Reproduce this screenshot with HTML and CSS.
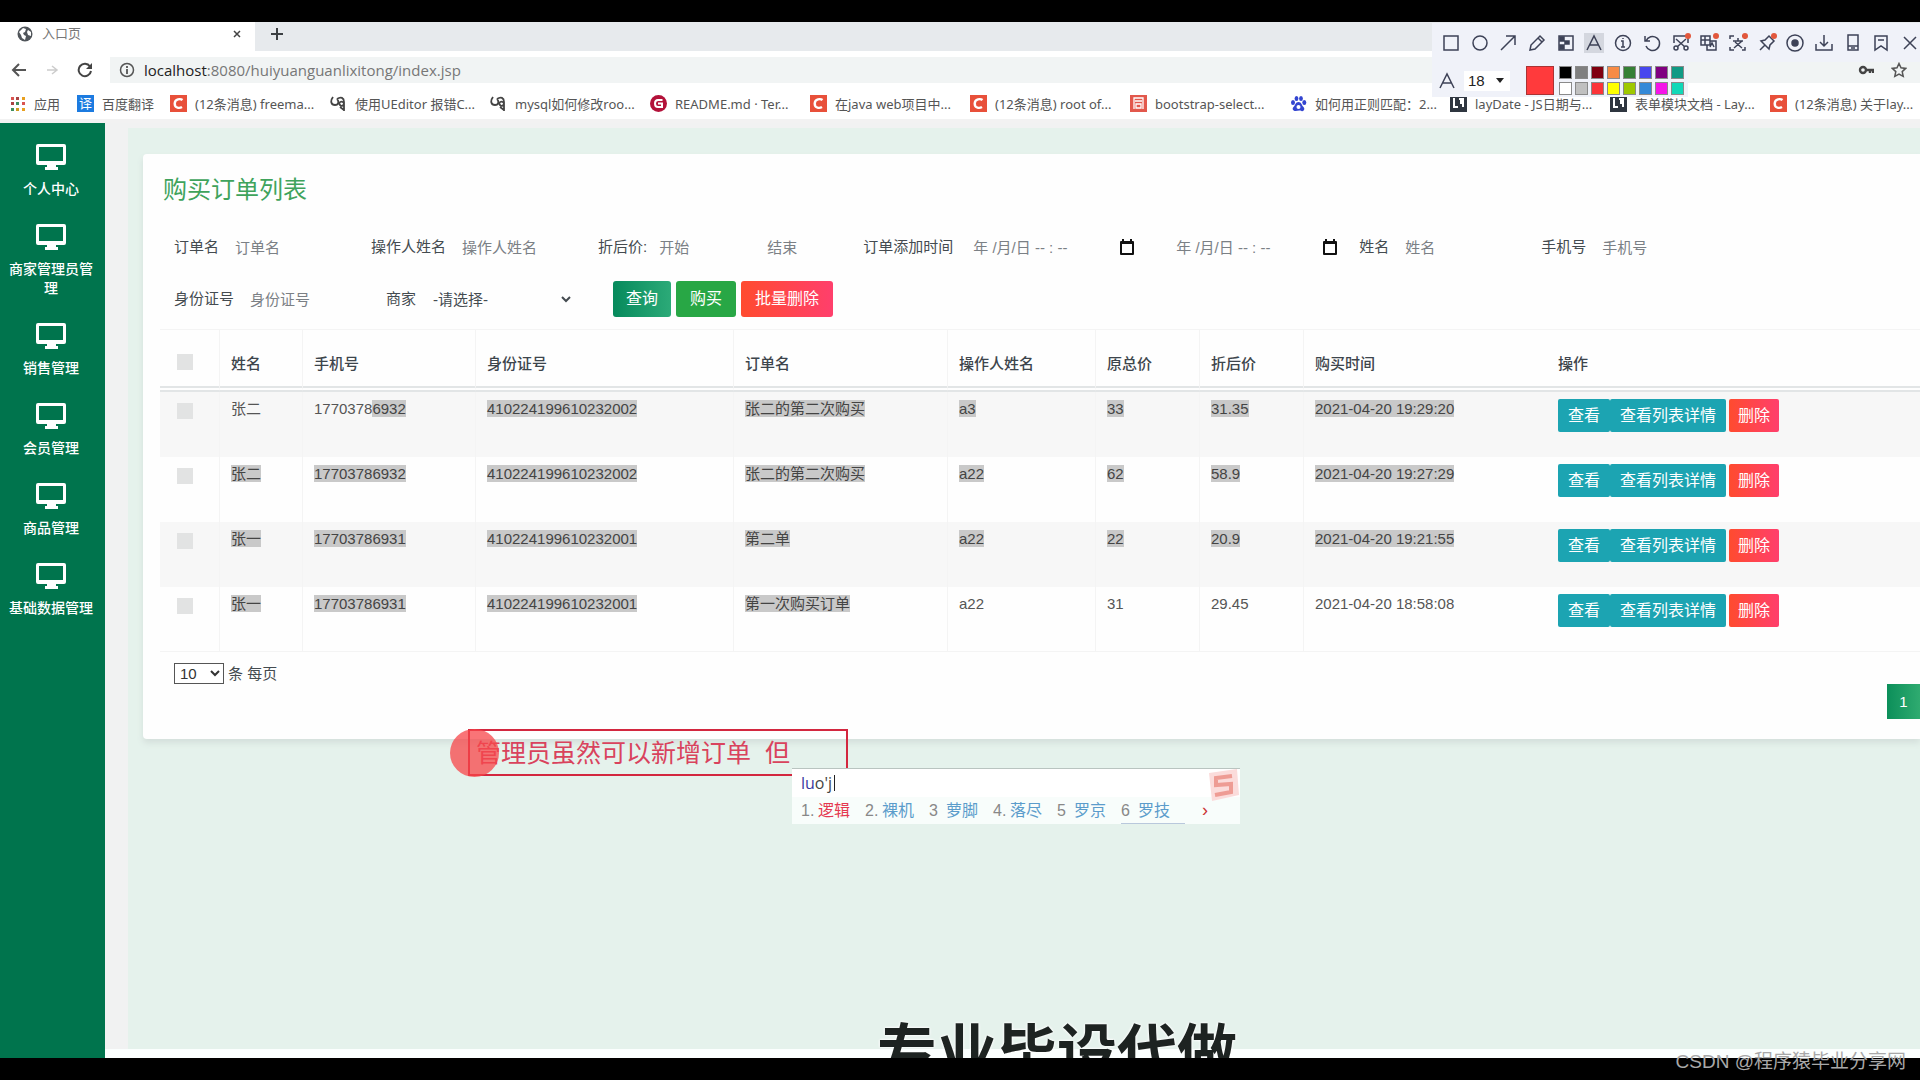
FILE: index.html
```html
<!DOCTYPE html>
<html lang="zh-CN">
<head>
<meta charset="utf-8">
<meta name="viewport" content="width=device-width, initial-scale=1">
<title>入口页</title>
<link rel="stylesheet" href="styles.css">
</head>
<body>
<svg class="sprite" aria-hidden="true">
  <symbol id="monitor" viewBox="0 0 30 26"><path fill-rule="evenodd" d="M2 0h26a2 2 0 0 1 2 2v17a2 2 0 0 1-2 2h-8v2h2v3H9v-3h2v-2H2a2 2 0 0 1-2-2V2a2 2 0 0 1 2-2zm1 3v14h24V3z"/></symbol>
  <symbol id="calendar" viewBox="0 0 16 16"><path fill-rule="evenodd" d="M3 0h2v2h6V0h2v2h1a1 1 0 0 1 1 1v12a1 1 0 0 1-1 1H2a1 1 0 0 1-1-1V3a1 1 0 0 1 1-1h1zM3 5v9h10V5z"/></symbol>
  <symbol id="csdn" viewBox="0 0 17 17"><path fill="#e8503a" d="M0 0h17v17H0z"/><path fill="none" stroke="#fff" stroke-width="2.4" d="M12.5 5C10.500 3.500 5 3.600 4.700 8.500c0 5 5 5 7.300 3.500"/></symbol>
  <symbol id="blog" viewBox="0 0 17 17"><path fill="none" stroke="#444" stroke-width="1.800" d="M3 2C0 6 1 10 5 10s4-4 2-6M7 4c4-3 7-1 7 3v9M14 8c-3-3-6 0-4 2s4 0 4-2M14 15l-4-3"/></symbol>
  <symbol id="lay" viewBox="0 0 17 17"><path fill="#2f3640" d="M0 0h17v17H0z"/><path fill="none" stroke="#fff" stroke-width="2" d="M4 3v9h4M9 4h4v8M11 4v5"/></symbol>
</svg>

<div class="screen">
  <header class="browser">
    <div class="tabs">
      <div class="tab">
        <svg class="i16" viewBox="0 0 16 16"><circle cx="8" cy="8" r="7.500" fill="#50555a"/><path fill="#fff" d="M2 6l4-4 3 1-1 3-2 1 1 2 2 1-1 4-3-2-1-3zM11 4l3 2v4l-3-1-1-3z"/></svg>
        <span class="tab-title">入口页</span>
        <button class="plain" aria-label="关闭标签页"><svg class="i10" viewBox="0 0 10 10"><path d="M2 2l6 6M8 2l-6 6" stroke="#444" stroke-width="1.500"/></svg></button>
      </div>
      <button class="plain new-tab" aria-label="新标签页"><svg class="i14" viewBox="0 0 14 14"><path d="M7 1v12M1 7h12" stroke="#3c4043" stroke-width="2"/></svg></button>
    </div>
    <div class="address-row">
      <button class="plain" aria-label="后退"><svg class="i16" viewBox="0 0 16 16"><path d="M15 8H2M8 2L2 8l6 6" fill="none" stroke="#555" stroke-width="2"/></svg></button>
      <button class="plain" aria-label="前进"><svg class="i16" viewBox="0 0 16 16"><path d="M3 8h10M8 4l5 4-5 4" fill="none" stroke="#ccc" stroke-width="1.500"/></svg></button>
      <button class="plain" aria-label="刷新"><svg class="i16" viewBox="0 0 16 16"><path d="M13 4.500A6.200 6.200 0 1 0 14 9" fill="none" stroke="#444" stroke-width="2"/><path d="M15 1v6H9z" fill="#444"/></svg></button>
      <div class="address">
        <svg class="i16" viewBox="0 0 16 16"><circle cx="8" cy="8" r="6.500" fill="none" stroke="#555" stroke-width="1.500"/><path d="M8 7v5M8 4v2" stroke="#555" stroke-width="1.800"/></svg>
        <span class="url"><b>localhost</b>:8080/huiyuanguanlixitong/index.jsp</span>
        <svg class="i16 key" viewBox="0 0 16 16"><path fill="none" stroke="#444" stroke-width="2.400" d="M8 8a3 3 0 1 0-6 0 3 3 0 0 0 6 0h7v3M12 8v3"/></svg>
        <svg class="i16" viewBox="0 0 16 16"><path fill="none" stroke="#555" stroke-width="1.500" d="M8 1.500l2 4.300 4.700.6-3.500 3.200 1 4.700L8 12l-4.200 2.300 1-4.700L1.300 6.400 6 5.800z"/></svg>
      </div>
    </div>
    <nav class="bookmarks" aria-label="书签">
      <a class="apps" href="#"><svg class="i14" viewBox="0 0 14 14"><path fill="#d9534f" d="M0 0h3v3H0zM11 5h3v3h-3z"/><path fill="#a44" d="M5 0h3v3H5zM0 5h3v3H0z"/><path fill="#e8a020" d="M11 0h3v3h-3zM11 11h3v3h-3z"/><path fill="#3f8f60" d="M5 5h3v3H5zM0 11h3v3H0z"/><path fill="#cc9c20" d="M5 11h3v3H5z"/></svg>应用</a>
      <a class="baidu" href="#"><span class="fan">译</span>百度翻译</a>
      <a href="#"><svg class="i17"><use href="#csdn"/></svg>(12条消息) freema...</a>
      <a href="#"><svg class="i17"><use href="#blog"/></svg>使用UEditor 报错C...</a>
      <a href="#"><svg class="i17"><use href="#blog"/></svg>mysql如何修改roo...</a>
      <a href="#"><svg class="i17" viewBox="0 0 17 17"><circle cx="8.500" cy="8.500" r="8.500" fill="#b3123a"/><path d="M12.500 5H8Q5 5 5 8.500T8 12h4V8.500H8" fill="none" stroke="#fff" stroke-width="2"/></svg>README.md · Ter...</a>
      <a href="#"><svg class="i17"><use href="#csdn"/></svg>在java web项目中...</a>
      <a href="#"><svg class="i17"><use href="#csdn"/></svg>(12条消息) root of...</a>
      <a href="#"><svg class="i17" viewBox="0 0 17 17"><path fill="#e2584c" d="M0 0h17v17H0z"/><path d="M4 14V3h9v11M5 6h7M6 9h5v4H6z" fill="none" stroke="#fff" stroke-width="1.300"/></svg>bootstrap-select...</a>
      <a href="#"><svg class="i17" viewBox="0 0 17 17"><g fill="#3345d0"><ellipse cx="3" cy="7.500" rx="2" ry="2.500"/><ellipse cx="6.500" cy="3.500" rx="1.900" ry="2.600"/><ellipse cx="11" cy="3.500" rx="1.900" ry="2.600"/><ellipse cx="14.300" cy="7.500" rx="2" ry="2.500"/><path d="M8.500 7c3 0 3 3 5 5s0 5-2 4-4 0-6 0-4-2-2-4 2-5 5-5z"/></g><circle cx="8.500" cy="12" r="2" fill="#fff"/></svg>如何用正则匹配：2...</a>
      <a href="#"><svg class="i17"><use href="#lay"/></svg>layDate - JS日期与...</a>
      <a href="#"><svg class="i17"><use href="#lay"/></svg>表单模块文档 - Lay...</a>
      <a href="#"><svg class="i17"><use href="#csdn"/></svg>(12条消息) 关于lay...</a>
    </nav>
  </header>

  <div class="app">
    <nav class="sidebar" aria-label="主菜单">
      <a href="#"><svg><use href="#monitor"/></svg>个人中心</a>
      <a href="#"><svg><use href="#monitor"/></svg>商家管理员管理</a>
      <a href="#"><svg><use href="#monitor"/></svg>销售管理</a>
      <a href="#"><svg><use href="#monitor"/></svg>会员管理</a>
      <a href="#"><svg><use href="#monitor"/></svg>商品管理</a>
      <a href="#"><svg><use href="#monitor"/></svg>基础数据管理</a>
    </nav>
    <main class="content">
      <section class="card">
        <h1>购买订单列表</h1>
        <form class="filters">
          <div class="field"><label for="f-order">订单名</label><input id="f-order" type="text" placeholder="订单名"></div>
          <div class="field"><label for="f-op">操作人姓名</label><input id="f-op" type="text" placeholder="操作人姓名"></div>
          <div class="field"><label for="f-min">折后价:</label><input class="short" id="f-min" type="text" placeholder="开始"><input class="short" type="text" aria-label="折后价结束" placeholder="结束"></div>
          <div class="field"><label for="f-from">订单添加时间</label>
            <div class="date"><input id="f-from" type="text" placeholder="年 /月/日 -- : --"><button class="plain" type="button" aria-label="选择开始时间"><svg class="i16"><use href="#calendar"/></svg></button></div>
            <div class="date"><input type="text" aria-label="结束时间" placeholder="年 /月/日 -- : --"><button class="plain" type="button" aria-label="选择结束时间"><svg class="i16"><use href="#calendar"/></svg></button></div>
          </div>
          <div class="field"><label for="f-name">姓名</label><input id="f-name" type="text" placeholder="姓名"></div>
          <div class="field"><label for="f-tel">手机号</label><input id="f-tel" type="text" placeholder="手机号"></div>
          <div class="field"><label for="f-id">身份证号</label><input id="f-id" type="text" placeholder="身份证号"></div>
          <div class="field"><label for="f-shop">商家</label><select id="f-shop"><option>-请选择-</option></select></div>
          <div class="buttons">
            <button class="btn query" type="button">查询</button>
            <button class="btn buy" type="button">购买</button>
            <button class="btn danger" type="button">批量删除</button>
          </div>
        </form>

        <table>
          <colgroup><col class="c-check"><col class="c-name"><col class="c-tel"><col class="c-id"><col class="c-order"><col class="c-op"><col class="c-price"><col class="c-price"><col class="c-time"><col></colgroup>
          <thead>
            <tr><th><input type="checkbox" aria-label="全选"></th><th>姓名</th><th>手机号</th><th>身份证号</th><th>订单名</th><th>操作人姓名</th><th>原总价</th><th>折后价</th><th>购买时间</th><th>操作</th></tr>
          </thead>
          <tbody>
            <tr><td><input type="checkbox" aria-label="选择第1行"></td><td>张二</td><td>1770378<mark>6932</mark></td><td><mark>410224199610232002</mark></td><td><mark>张二的第二次购买</mark></td><td><mark>a3</mark></td><td><mark>33</mark></td><td><mark>31.35</mark></td><td><mark>2021-04-20 19:29:20</mark></td><td><div class="actions"><button class="btn info">查看</button><button class="btn info">查看列表详情</button><button class="btn danger">删除</button></div></td></tr>
            <tr><td><input type="checkbox" aria-label="选择第2行"></td><td><mark>张二</mark></td><td><mark>17703786932</mark></td><td><mark>410224199610232002</mark></td><td><mark>张二的第二次购买</mark></td><td><mark>a22</mark></td><td><mark>62</mark></td><td><mark>58.9</mark></td><td><mark>2021-04-20 19:27:29</mark></td><td><div class="actions"><button class="btn info">查看</button><button class="btn info">查看列表详情</button><button class="btn danger">删除</button></div></td></tr>
            <tr><td><input type="checkbox" aria-label="选择第3行"></td><td><mark>张一</mark></td><td><mark>17703786931</mark></td><td><mark>410224199610232001</mark></td><td><mark>第二单</mark></td><td><mark>a22</mark></td><td><mark>22</mark></td><td><mark>20.9</mark></td><td><mark>2021-04-20 19:21:55</mark></td><td><div class="actions"><button class="btn info">查看</button><button class="btn info">查看列表详情</button><button class="btn danger">删除</button></div></td></tr>
            <tr><td><input type="checkbox" aria-label="选择第4行"></td><td><mark>张一</mark></td><td><mark>17703786931</mark></td><td><mark>410224199610232001</mark></td><td><mark>第一次购买订单</mark></td><td>a22</td><td>31</td><td>29.45</td><td>2021-04-20 18:58:08</td><td><div class="actions"><button class="btn info">查看</button><button class="btn info">查看列表详情</button><button class="btn danger">删除</button></div></td></tr>
          </tbody>
        </table>

        <div class="page-size"><select id="page-size"><option>10</option></select><label for="page-size">条 每页</label></div>
        <div class="pager"><button class="page">1</button></div>
      </section>
    </main>
  </div>

  <aside class="snip" aria-label="截图工具">
    <div class="snip-tools">
      <svg viewBox="0 0 20 20"><path d="M3 3h14v14H3z"/></svg>
      <svg viewBox="0 0 20 20"><circle cx="10" cy="10" r="7"/></svg>
      <svg viewBox="0 0 20 20"><path d="M3 17L17 3M8 3h9v9"/></svg>
      <svg viewBox="0 0 20 20"><path d="M3 17l1-5 9-9 4 4-9 9zM11 5l4 4"/></svg>
      <svg viewBox="0 0 20 20"><path d="M3 3h14v14H3z"/><path class="solid" d="M4 4h4v4H4zM9 8h4v3H9zM4 12h4v4H4z"/></svg>
      <svg class="active" viewBox="0 0 20 20"><path d="M3 17l7-14 7 14M6 12h8"/></svg>
      <svg viewBox="0 0 20 20"><circle cx="10" cy="10" r="7.500"/><path d="M8 8h2v6M8 14h4M10 5v1"/></svg>
      <svg viewBox="0 0 20 20"><path d="M3 3v5h5M4 8a7 7 0 1 1 0 5"/></svg>
      <svg viewBox="0 0 20 20"><path d="M3 10V3h14v7M5 6l9 8M15 6l-9 8"/><circle cx="5" cy="15" r="2"/><circle cx="15" cy="15" r="2"/><circle class="dot" cx="17" cy="3" r="3"/></svg>
      <svg viewBox="0 0 20 20"><path d="M2 3h9v9H2zM2 7h9M6 3v9M8 12v5h9V8h-6M11 14l2-4 2 4"/><circle class="dot" cx="17" cy="3" r="3"/></svg>
      <svg viewBox="0 0 20 20"><path d="M2 6V3h4M14 3h3v3M2 14v3h4M14 17h3v-3M5 8h10M10 5v3M6 15l8-7M7 9l7 6"/><circle class="dot" cx="17" cy="3" r="3"/></svg>
      <svg viewBox="0 0 20 20"><path d="M3 17l5-5M4 8l8 8 1-4 4-4-5-5-4 4z"/><circle class="dot" cx="17" cy="3" r="3"/></svg>
      <svg viewBox="0 0 20 20"><circle cx="10" cy="10" r="8"/><circle class="solid" cx="10" cy="10" r="3"/></svg>
      <svg viewBox="0 0 20 20"><path d="M10 2v10M6 9l4 4 4-4M2 11v6h16v-6"/></svg>
      <svg viewBox="0 0 20 20"><path d="M5 2h10v15H5zM5 13h10M8 15h4"/></svg>
      <svg viewBox="0 0 20 20"><path d="M4 3h12v14l-6-4-6 4zM7 7h6"/></svg>
      <svg viewBox="0 0 20 20"><path d="M4 4l12 12M16 4L4 16"/></svg>
    </div>
    <div class="snip-options">
      <svg class="font-icon" viewBox="0 0 20 20"><path d="M3 17l7-14 7 14M6 12h8"/></svg>
      <button class="size">18<svg viewBox="0 0 10 6"><path d="M0 0h10L5 6z"/></svg></button>
      <span class="current"></span>
      <div class="palette">
        <i class="k1"></i><i class="k2"></i><i class="k3"></i><i class="k4"></i><i class="k5"></i><i class="k6"></i><i class="k7"></i><i class="k8"></i>
        <i class="k9"></i><i class="k10"></i><i class="k11"></i><i class="k12"></i><i class="k13"></i><i class="k14"></i><i class="k15"></i><i class="k16"></i>
      </div>
    </div>
  </aside>

  <div class="note">管理员虽然可以新增订单&nbsp; 但</div>
  <div class="pointer"></div>

  <div class="ime">
    <div class="pinyin"><b>lu</b>o'j<span class="caret"></span></div>
    <ol>
      <li class="first"><span>1.</span>逻辑</li><li><span>2.</span>裸机</li><li><span>3</span>萝脚</li><li><span>4.</span>落尽</li><li><span>5</span>罗京</li><li><span>6</span>罗技</li>
    </ol>
    <span class="more">›</span>
    <svg class="sogou" viewBox="0 0 34 34"><path d="M3 5l28-4 2 26-27 6z" fill="#fbdcdb"/><path d="M26 8L10 10v7l15-1v8L9 27" fill="none" stroke="#ee9c94" stroke-width="4"/></svg>
  </div>

  <div class="caption">专业毕设代做</div>
</div>
<footer class="letterbox"><span>CSDN @程序猿毕业分享网</span></footer>
</body>
</html>
```
FILE: styles.css
```css
* { box-sizing: border-box; }

body {
  margin: 0;
  min-height: 100vh;
  display: flex;
  flex-direction: column;
  padding-top: 22px;
  background: #000;
  color: #444b50;
  font: 15px/20px "Liberation Sans", "Noto Sans CJK SC", sans-serif;
  overflow-x: hidden;
}

button, input, select { font: inherit; color: inherit; }
a { color: inherit; text-decoration: none; }
svg { flex: none; }

.sprite { position: absolute; width: 0; height: 0; }
.i10 { width: 10px; height: 10px; }
.i14 { width: 14px; height: 14px; }
.i16 { width: 16px; height: 16px; }
.i17 { width: 17px; height: 17px; }

.plain {
  display: flex;
  align-items: center;
  padding: 0;
  border: 0;
  background: none;
}

.screen {
  position: relative;
  flex: 1;
  display: flex;
  flex-direction: column;
  overflow: hidden;
  background: #fbfffe;
}

/* browser frame */
.browser {
  background: #fff;
  border-bottom: 4px solid #f2f2f2;
}

.tabs {
  display: flex;
  height: 29px;
  background: #e7eaed;
}

.tab {
  display: flex;
  align-items: center;
  gap: 9px;
  width: 255px;
  padding: 0 13px 6px 17px;
  background: #fff;
}

.tab-title { flex: 1; font-size: 13px; color: #777; }
.new-tab { padding: 0 0 6px 15px; }

.address-row {
  display: flex;
  align-items: center;
  gap: 17px;
  height: 37px;
  padding-left: 11px;
}

.address {
  flex: 1;
  display: flex;
  align-items: center;
  gap: 9px;
  height: 26px;
  padding: 0 13px 0 9px;
  background: #f1f4f4;
}

.url {
  flex: 1;
  color: #777;
  font: 15px/20px "Open Sans", "Noto Sans", sans-serif;
}

.url b { font-weight: 400; color: #222; }
.key { margin-right: 8px; }

.bookmarks {
  display: flex;
  align-items: center;
  height: 31px;
  padding-left: 11px;
  overflow: hidden;
  font: 13px/20px "Noto Sans", "Noto Sans CJK SC", sans-serif;
  color: #555;
}

.bookmarks a {
  flex: none;
  display: flex;
  align-items: center;
  gap: 8px;
  width: 160px;
  white-space: nowrap;
}

.bookmarks .apps { width: 66px; gap: 9px; }
.bookmarks .baidu { width: 93px; }

.fan {
  width: 17px;
  height: 17px;
  background: #1c7be0;
  color: #fff;
  text-align: center;
  line-height: 16px;
}

/* application shell */
.app {
  flex: 1;
  display: flex;
}

.sidebar {
  flex: none;
  width: 105px;
  padding-top: 21px;
  background: #00744d;
  color: #fff;
}

.sidebar a {
  display: flex;
  flex-direction: column;
  align-items: center;
  gap: 10px;
  margin-bottom: 25px;
  padding: 0 8px 0 5px;
  font-size: 14px;
  font-weight: 500;
  line-height: 19px;
  text-align: center;
}

.sidebar svg { width: 30px; height: 26px; fill: #fff; }

.content {
  flex: 1;
  min-width: 0;
  margin-bottom: 9px;
  padding: 26px 0 0 15px;
  border-top: 5px solid #f1f2f2;
  border-left: 23px solid #f1f2f2;
  background: #e5f2ec;
}

.card {
  padding: 20px 0 20px 17px;
  border-radius: 4px 0 0 4px;
  background: #fefefe;
  box-shadow: 0 4px 6px #d4dfdb;
}

h1 {
  margin: 0 0 23px 3px;
  color: #3fa35c;
  font-size: 24px;
  font-weight: 400;
  line-height: 32px;
}

/* search form */
.filters {
  display: flex;
  flex-wrap: wrap;
  row-gap: 16px;
  margin: 0 0 12px 14px;
}

.field { display: flex; align-items: center; height: 36px; }

.field input {
  width: 152px;
  height: 34px;
  padding: 0 0 0 16px;
  border: 0;
  background: none;
}

.field input::placeholder { color: #7b8085; opacity: 1; }
.field .short { width: 108px; padding-left: 12px; }
.date { display: flex; width: 203px; }
.field .date input { width: 166px; padding-left: 20px; }
.date svg { fill: #111; }

.field select {
  width: 158px;
  height: 34px;
  margin-right: 39px;
  padding-left: 13px;
  border: 0;
  background: none;
}

.buttons { display: flex; gap: 5px; }

.btn {
  padding: 0 12px;
  border: 0;
  border-radius: 3px;
  color: #fff;
  font-size: 16px;
  line-height: 36px;
}

.query { padding: 0 13px; background: linear-gradient(90deg, #068a5c, #2caa78); }
.buy { padding: 0 14px; background: #28a745; }
.buttons .danger { padding: 0 14px; }
.danger { background: linear-gradient(90deg, #ff4b2f, #ff3f6c); }
.info { background: #1ca4b2; }

/* order table */
table {
  width: 100%;
  table-layout: fixed;
  border-spacing: 0;
  border-top: 1px solid #f4f4f4;
}

.c-check { width: 59px; }
.c-name { width: 83px; }
.c-tel { width: 173px; }
.c-id { width: 258px; }
.c-order { width: 214px; }
.c-op { width: 148px; }
.c-price { width: 104px; }
.c-time { width: 244px; }

th, td {
  padding: 7px 0 0 11px;
  border-left: 1px solid #f4f4f4;
  text-align: left;
  vertical-align: top;
  white-space: nowrap;
}

th:first-child, td:first-child { padding-left: 17px; border-left: 0; }
th:last-child, td:last-child { border-left: 0; }
td:first-child { padding-top: 11px; }

th {
  height: 62px;
  padding-top: 24px;
  border-bottom: 6px double #e2e5e6;
  color: #3d454c;
  font-weight: 500;
}

td { height: 65px; color: #555; }
tbody tr:nth-child(odd) { background: #f7f7f7; }
tbody tr:last-child td { border-bottom: 1px solid #f4f4f4; }

input[type="checkbox"] {
  appearance: none;
  display: block;
  width: 16px;
  height: 16px;
  margin: 0;
  background: #e2e3e3;
}

mark { background: #c9c9c9; color: #444; }

.actions { display: flex; }
.actions .btn { padding: 0 10px; border-radius: 2px; line-height: 33px; }
.actions .danger { margin-left: 3px; padding: 0 9px; }

/* table footer */
.page-size {
  display: flex;
  align-items: center;
  gap: 4px;
  margin: 11px 0 0 14px;
}

.page-size select {
  width: 50px;
  height: 21px;
  padding: 0 1px;
  border: 1px solid #555;
  border-radius: 0;
  background: #fff;
  color: #333;
}

.pager { display: flex; justify-content: flex-end; }

.page {
  width: 33px;
  height: 35px;
  padding: 0;
  border: 0;
  background: linear-gradient(90deg, #0c8f5a, #2fab70);
  color: #fff;
}

/* screenshot toolbar lying over the browser */
.snip {
  position: absolute;
  top: 1px;
  right: 0;
  width: 488px;
}

.snip svg {
  width: 20px;
  height: 20px;
  fill: none;
  stroke: #3d4257;
  stroke-width: 1.5;
}

.snip .solid { fill: #3d4257; }
.snip .dot { fill: #e2573c; stroke: none; }
.snip .active { background: #d4d7df; }

.snip-tools {
  display: flex;
  align-items: center;
  justify-content: space-between;
  height: 39px;
  padding-left: 9px;
  background: #f0f2f9;
}

.snip-options {
  display: flex;
  align-items: center;
  width: 256px;
  height: 35px;
  padding: 2px 4px 0 5px;
  background: #f0f2f9;
}

.size {
  display: flex;
  align-items: center;
  justify-content: space-between;
  width: 46px;
  height: 20px;
  margin: 0 16px 0 7px;
  padding: 0 6px 0 4px;
  border: 0;
  background: #fff;
  color: #222;
}

.snip .size svg { width: 8px; height: 5px; fill: #222; stroke: none; }

.current {
  flex: none;
  width: 28px;
  height: 29px;
  margin-right: 5px;
  border: 1px solid #a33;
  background: #ff3a3c;
}

.palette {
  display: grid;
  grid-template-columns: repeat(8, 13px);
  gap: 3px;
}

.palette i { height: 13px; border: 1px solid #8a8a8a; }
.k1 { background: #000; }
.k2 { background: #808080; }
.k3 { background: #800010; }
.k4 { background: #f78b45; }
.k5 { background: #358035; }
.k6 { background: #4747ee; }
.k7 { background: #800080; }
.k8 { background: #109a85; }
.k9 { background: #fff; }
.k10 { background: #c0c0c0; }
.k11 { background: #fb3438; }
.k12 { background: #ff0; }
.k13 { background: #9fc800; }
.k14 { background: #3389d8; }
.k15 { background: #f514e8; }
.k16 { background: #10d8b8; }

/* annotation typed on the captured screen */
.note {
  position: absolute;
  top: 707px;
  left: 468px;
  width: 380px;
  height: 47px;
  padding-left: 6px;
  border: 2px solid #d3273f;
  color: #d9435d;
  font-size: 25px;
  line-height: 44px;
  white-space: nowrap;
}

.pointer {
  position: absolute;
  top: 707px;
  left: 450px;
  width: 49px;
  height: 48px;
  border-radius: 50%;
  background: rgba(247, 70, 74, 0.75);
}

.ime {
  position: absolute;
  top: 746px;
  left: 792px;
  width: 448px;
  height: 56px;
  padding-left: 9px;
  border-top: 1px solid #b9c4c0;
  background: linear-gradient(#fff 28px, #f8fdfb 28px);
}

.pinyin {
  display: flex;
  align-items: center;
  height: 28px;
  color: #444;
  font: 16px/28px "Open Sans", sans-serif;
}

.pinyin b { color: #3a38a0; font-weight: 400; }
.caret { width: 1px; height: 16px; margin-left: 2px; background: #222; }

.ime ol {
  display: grid;
  grid-template-columns: repeat(6, 64px);
  margin: 0;
  padding: 2px 0 0;
  list-style: none;
  color: #5b9ccb;
}

.ime li { display: flex; gap: 3px; font-size: 16px; line-height: 24px; white-space: nowrap; }
.ime li span { width: 14px; color: #888; }
.ime .first { color: #e5384f; }
.ime li:last-child { border-bottom: 1px solid #b9c8dc; }
.more { position: absolute; right: 32px; bottom: 4px; color: #c33; font-size: 18px; }
.sogou { position: absolute; top: -1px; right: 0; width: 34px; height: 34px; }

/* caption that runs under the lower letterbox bar */
.caption {
  position: absolute;
  bottom: -28px;
  left: 877px;
  color: #1d2321;
  font-size: 60px;
  font-weight: 700;
  line-height: 64px;
  text-shadow: 0 0 3px #fff, 0 0 3px #fff;
}

.letterbox {
  position: relative;
  height: 22px;
  background: #000;
}

.letterbox span {
  position: absolute;
  right: 14px;
  bottom: 6px;
  color: #a8a8a8;
  font-size: 19px;
  line-height: 24px;
}
```
